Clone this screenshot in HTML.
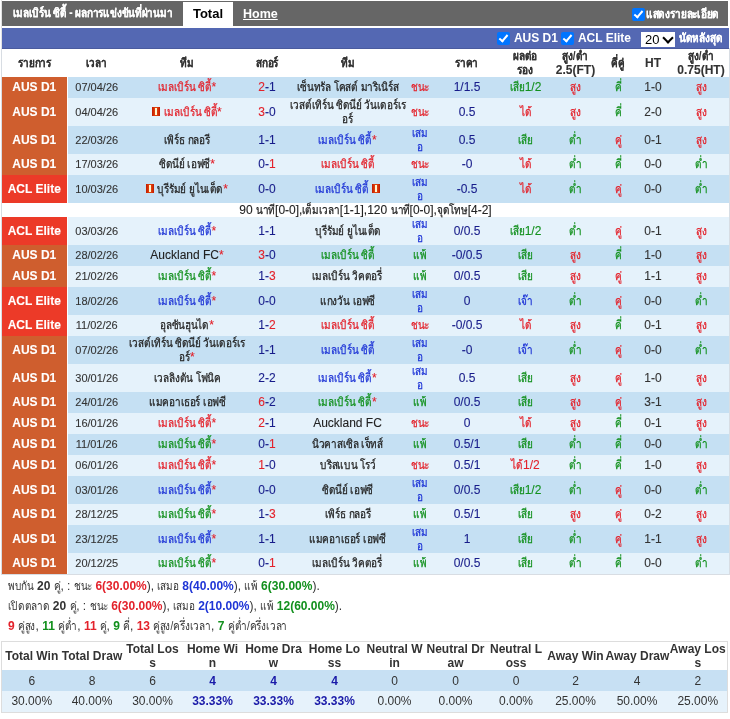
<!DOCTYPE html>
<html><head><meta charset="utf-8">
<style>
*{box-sizing:border-box}
html,body{margin:0;padding:0;background:#fff}
body{width:730px;height:719px;overflow:hidden;position:relative;will-change:transform;font-family:"Liberation Sans",sans-serif;color:#333}
.t{display:inline-block;transform:scaleX(.83);transform-origin:0 50%;line-height:10px;-webkit-text-stroke-width:.25px}
#title .t,#detail .t,#bar .t{-webkit-text-stroke-width:.15px}
tr.hd .t{-webkit-text-stroke-width:.05px}
#sum .t{-webkit-text-stroke-width:0}
tr.hd .t{line-height:14px}
#frame{position:absolute;left:1px;top:48px;width:729px;height:527px;border:1px solid #d8dde3;border-top:0}
.vline{position:absolute;left:1px;top:0;width:1px;height:575px;background:#e3e3e3}
#title{position:absolute;left:2px;top:1px;width:726px;height:25px;background:#666}
#title .tt{position:absolute;left:11px;top:0;line-height:25px;color:#fff;font-weight:bold;font-size:12px;white-space:nowrap}
#tabTotal{position:absolute;left:183px;top:2px;width:50px;height:26px;background:#fff;color:#000;font-weight:bold;font-size:13px;line-height:24px;text-align:center}
#tabHome{position:absolute;left:243px;top:2px;line-height:25px;color:#fff;font-weight:bold;font-size:12.5px;text-decoration:underline}
#detail{position:absolute;left:632px;top:2px;height:25px;color:#fff;font-weight:bold;font-size:12px;line-height:25px;white-space:nowrap}
.chk{display:inline-block;width:13px;height:13px;border-radius:2px;background:#0075ff;vertical-align:middle;position:relative;margin-right:1px}
.chk:after{content:"";position:absolute;left:4px;top:1px;width:3px;height:7px;border:solid #fff;border-width:0 2px 2px 0;transform:rotate(40deg)}
#bar{position:absolute;left:2px;top:28px;width:727px;height:21px;background:#5468b3;border-bottom:1px solid #4a5b9e;z-index:2}
#bar .f{position:absolute;top:0;line-height:20px;color:#fff;font-weight:bold;font-size:12px;white-space:nowrap}
#sel{position:absolute;left:639px;top:4px;width:34px;height:15px;background:#fff;color:#000;font-size:13px;line-height:15px;padding-left:4px}
#sel:after{content:"";position:absolute;left:23px;top:2px;width:6px;height:6px;border:solid #000;border-width:0 2.5px 2.5px 0;transform:rotate(45deg)}
#main{position:absolute;left:2px;top:48px;width:727px;border-collapse:collapse;table-layout:fixed}
#main td{-webkit-text-stroke-width:.1px;padding:0;text-align:center;vertical-align:middle;line-height:14px;font-size:12px;white-space:nowrap;overflow:visible}
#main tr.hd td{height:29px;background:#fff;font-weight:bold;color:#333;line-height:14px}
#main tr.sh td{height:21px;padding-bottom:2px}
#main tr.tall td{height:28px}
#main tr.k td{background:#c5e0f3}
#main tr.l td{background:#e5f2fb}
#main tr.info td{height:14px;background:#fff;font-size:12px;line-height:14px;color:#222}
#main td.lg{color:#fff;font-weight:bold;font-size:12px;border-right:1px solid #fff}
#main td.aus{background:#cf5e2e !important}
#main td.acl{background:#ec3a28 !important}
#main td.dt{font-size:11px;color:#333}
.cr{color:#e3222b}.cb_{color:#1a2fd0}
.cd{color:#222}
.cR,.cr{color:#e3222b}
.cB,.cb{color:#1f35d6}
.cG,.cg{color:#12901d}
td.cb{color:#1f35d6}
#main td.sc{color:#171c8a}
#main td.od{color:#171c8a}
#main td.ht{color:#333}
.st{color:#e3222b}
.rc{display:inline-block;width:8px;height:9px;background:linear-gradient(90deg,#c01a00,#e0400a 35%,#e0400a 65%,#c01a00);vertical-align:0px;position:relative}
.rc:after{content:"";position:absolute;left:3px;top:1px;width:2px;height:7px;background:#fff6d0}
#sum{position:absolute;left:8px;top:576px;font-size:12px;line-height:20px;color:#333;white-space:nowrap}
#sum b{font-weight:bold}
#stats{position:absolute;left:1px;top:641px;width:727px;border-collapse:collapse;table-layout:fixed;border:1px solid #ddd}
#stats td{padding:0;text-align:center;vertical-align:middle;font-size:12px;line-height:14px;white-space:nowrap}
#stats tr.sh td{height:28px;background:#fff;font-weight:bold;color:#333}
#stats tr.v td{height:21px;background:#c7e0f3}
#stats tr.p td{height:21px;background:#e6f2fb}
#stats .n{color:#1a1aa8;font-weight:bold}
</style></head><body>
<div class="vline"></div>
<div id="frame"></div>
<div id="title"><div class="tt"><span class="t" style="margin-right: -32.64px;">เมลเบิร์น ซิตี้ - ผลการแข่งขันที่ผ่านมา</span></div></div>
<div id="tabTotal">Total</div>
<div id="tabHome">Home</div>
<div id="detail"><span class="chk"></span><span class="t" style="margin-right: -14.96px;">แสดงรายละเอียด</span></div>
<div id="bar">
 <div class="f" style="left:495px"><span class="chk"></span> AUS D1</div>
 <div class="f" style="left:559px"><span class="chk"></span> ACL Elite</div>
 <div id="sel">20</div>
 <div class="f" style="left:677px"><span class="t" style="margin-right: -8.84px;">นัดหลังสุด</span></div>
</div>
<table id="main">
<colgroup><col style="width:65px"><col style="width:59px"><col style="width:122px"><col style="width:38px"><col style="width:123px"><col style="width:22px"><col style="width:72px"><col style="width:45px"><col style="width:55px"><col style="width:30px"><col style="width:40px"><col style="width:56px"></colgroup>
<tbody><tr class="hd"><td><span class="t" style="margin-right: -6.8px;">รายการ</span></td><td><span class="t" style="margin-right: -4.25px;">เวลา</span></td><td><span class="t" style="margin-right: -2.72px;">ทีม</span></td><td><span class="t" style="margin-right: -4.59px;">สกอร์</span></td><td><span class="t" style="margin-right: -2.72px;">ทีม</span></td><td></td><td><span class="t" style="margin-right: -4.76px;">ราคา</span></td><td><span class="t" style="margin-right: -4.93px;">ผลต่อ<br>รอง</span></td><td><span class="t" style="margin-right: -5.27px;">สูง/ต่ำ</span><br>2.5(FT)</td><td><span class="t" style="margin-right: -2.72px;">คี่คู่</span></td><td>HT</td><td><span class="t" style="margin-right: -5.27px;">สูง/ต่ำ</span><br>0.75(HT)</td></tr>
<tr class="sh k"><td class="lg aus">AUS D1</td><td class="dt">07/04/26</td><td class="tm cr"><span class="t" style="margin-right: -10.88px;">เมลเบิร์น ซิตี้</span><span class="st">*</span></td><td class="sc"><span class="cr">2</span>-1</td><td class="tm cd"><span class="t" style="margin-right: -20.91px;">เซ็นทรัล โคสต์ มาริเนิร์ส</span></td><td class="rs cr"><span class="t" style="margin-right: -3.74px;">ชนะ</span></td><td class="od">1/1.5</td><td class="hr cg"><span class="t" style="margin-right: -3.06px;">เสีย</span>1/2</td><td class="ou cr"><span class="t" style="margin-right: -2.21px;">สูง</span></td><td class="oe cg"><span class="t" style="margin-right: -1.36px;">คี่</span></td><td class="ht">1-0</td><td class="ou cr"><span class="t" style="margin-right: -2.21px;">สูง</span></td></tr>
<tr class="tall l"><td class="lg aus">AUS D1</td><td class="dt">04/04/26</td><td class="tm cr"><i class="rc"></i> <span class="t" style="margin-right: -10.88px;">เมลเบิร์น ซิตี้</span><span class="st">*</span></td><td class="sc"><span class="cr">3</span>-0</td><td class="tm cd"><span class="t" style="margin-right: -23.8px;">เวสต์เทิร์น ซิดนีย์ วันเดอร์เร</span><br><span class="t" style="margin-right: -2.21px;">อร์</span></td><td class="rs cr"><span class="t" style="margin-right: -3.74px;">ชนะ</span></td><td class="od">0.5</td><td class="hr cr"><span class="t" style="margin-right: -2.38px;">ได้</span></td><td class="ou cr"><span class="t" style="margin-right: -2.21px;">สูง</span></td><td class="oe cg"><span class="t" style="margin-right: -1.36px;">คี่</span></td><td class="ht">2-0</td><td class="ou cr"><span class="t" style="margin-right: -2.21px;">สูง</span></td></tr>
<tr class="tall k"><td class="lg aus">AUS D1</td><td class="dt">22/03/26</td><td class="tm cd"><span class="t" style="margin-right: -9.35px;">เพิร์ธ กลอรี</span></td><td class="sc">1-1</td><td class="tm cb"><span class="t" style="margin-right: -10.88px;">เมลเบิร์น ซิตี้</span><span class="st">*</span></td><td class="rs cb"><span class="t" style="margin-right: -3.23px;">เสม</span><br><span class="t" style="margin-right: -1.19px;">อ</span></td><td class="od">0.5</td><td class="hr cg"><span class="t" style="margin-right: -3.06px;">เสีย</span></td><td class="ou cg"><span class="t" style="margin-right: -2.55px;">ต่ำ</span></td><td class="oe cr"><span class="t" style="margin-right: -1.36px;">คู่</span></td><td class="ht">0-1</td><td class="ou cr"><span class="t" style="margin-right: -2.21px;">สูง</span></td></tr>
<tr class="sh l"><td class="lg aus">AUS D1</td><td class="dt">17/03/26</td><td class="tm cd"><span class="t" style="margin-right: -10.37px;">ซิดนีย์ เอฟซี</span><span class="st">*</span></td><td class="sc">0-<span class="cr">1</span></td><td class="tm cr"><span class="t" style="margin-right: -10.88px;">เมลเบิร์น ซิตี้</span></td><td class="rs cr"><span class="t" style="margin-right: -3.74px;">ชนะ</span></td><td class="od">-0</td><td class="hr cr"><span class="t" style="margin-right: -2.38px;">ได้</span></td><td class="ou cg"><span class="t" style="margin-right: -2.55px;">ต่ำ</span></td><td class="oe cg"><span class="t" style="margin-right: -1.36px;">คี่</span></td><td class="ht">0-0</td><td class="ou cg"><span class="t" style="margin-right: -2.55px;">ต่ำ</span></td></tr>
<tr class="tall k"><td class="lg acl">ACL Elite</td><td class="dt">10/03/26</td><td class="tm cd"><i class="rc"></i> <span class="t" style="margin-right: -13.43px;">บุรีรัมย์ ยูไนเต็ด</span><span class="st">*</span></td><td class="sc">0-0</td><td class="tm cb"><span class="t" style="margin-right: -10.88px;">เมลเบิร์น ซิตี้</span> <i class="rc"></i></td><td class="rs cb"><span class="t" style="margin-right: -3.23px;">เสม</span><br><span class="t" style="margin-right: -1.19px;">อ</span></td><td class="od">-0.5</td><td class="hr cr"><span class="t" style="margin-right: -2.38px;">ได้</span></td><td class="ou cg"><span class="t" style="margin-right: -2.55px;">ต่ำ</span></td><td class="oe cr"><span class="t" style="margin-right: -1.36px;">คู่</span></td><td class="ht">0-0</td><td class="ou cg"><span class="t" style="margin-right: -2.55px;">ต่ำ</span></td></tr>
<tr class="info"><td colspan="12">90 <span class="t" style="margin-right: -3.91px;">นาที</span>[0-0],<span class="t" style="margin-right: -7.65px;">เต็มเวลา</span>[1-1],120 <span class="t" style="margin-right: -3.91px;">นาที</span>[0-0],<span class="t" style="margin-right: -6.29px;">จุดโทษ</span>[4-2]</td></tr>
<tr class="tall l"><td class="lg acl">ACL Elite</td><td class="dt">03/03/26</td><td class="tm cb"><span class="t" style="margin-right: -10.88px;">เมลเบิร์น ซิตี้</span><span class="st">*</span></td><td class="sc">1-1</td><td class="tm cd"><span class="t" style="margin-right: -13.43px;">บุรีรัมย์ ยูไนเต็ด</span></td><td class="rs cb"><span class="t" style="margin-right: -3.23px;">เสม</span><br><span class="t" style="margin-right: -1.19px;">อ</span></td><td class="od">0/0.5</td><td class="hr cg"><span class="t" style="margin-right: -3.06px;">เสีย</span>1/2</td><td class="ou cg"><span class="t" style="margin-right: -2.55px;">ต่ำ</span></td><td class="oe cr"><span class="t" style="margin-right: -1.36px;">คู่</span></td><td class="ht">0-1</td><td class="ou cr"><span class="t" style="margin-right: -2.21px;">สูง</span></td></tr>
<tr class="sh k"><td class="lg aus">AUS D1</td><td class="dt">28/02/26</td><td class="tm cd">Auckland FC<span class="st">*</span></td><td class="sc"><span class="cr">3</span>-0</td><td class="tm cg"><span class="t" style="margin-right: -10.88px;">เมลเบิร์น ซิตี้</span></td><td class="rs cg"><span class="t" style="margin-right: -2.72px;">แพ้</span></td><td class="od">-0/0.5</td><td class="hr cg"><span class="t" style="margin-right: -3.06px;">เสีย</span></td><td class="ou cr"><span class="t" style="margin-right: -2.21px;">สูง</span></td><td class="oe cg"><span class="t" style="margin-right: -1.36px;">คี่</span></td><td class="ht">1-0</td><td class="ou cr"><span class="t" style="margin-right: -2.21px;">สูง</span></td></tr>
<tr class="sh l"><td class="lg aus">AUS D1</td><td class="dt">21/02/26</td><td class="tm cg"><span class="t" style="margin-right: -10.88px;">เมลเบิร์น ซิตี้</span><span class="st">*</span></td><td class="sc">1-<span class="cr">3</span></td><td class="tm cd"><span class="t" style="margin-right: -14.28px;">เมลเบิร์น วิคตอรี่</span></td><td class="rs cg"><span class="t" style="margin-right: -2.72px;">แพ้</span></td><td class="od">0/0.5</td><td class="hr cg"><span class="t" style="margin-right: -3.06px;">เสีย</span></td><td class="ou cr"><span class="t" style="margin-right: -2.21px;">สูง</span></td><td class="oe cr"><span class="t" style="margin-right: -1.36px;">คู่</span></td><td class="ht">1-1</td><td class="ou cr"><span class="t" style="margin-right: -2.21px;">สูง</span></td></tr>
<tr class="tall k"><td class="lg acl">ACL Elite</td><td class="dt">18/02/26</td><td class="tm cb"><span class="t" style="margin-right: -10.88px;">เมลเบิร์น ซิตี้</span><span class="st">*</span></td><td class="sc">0-0</td><td class="tm cd"><span class="t" style="margin-right: -11.22px;">แกงวัน เอฟซี</span></td><td class="rs cb"><span class="t" style="margin-right: -3.23px;">เสม</span><br><span class="t" style="margin-right: -1.19px;">อ</span></td><td class="od">0</td><td class="hr cb"><span class="t" style="margin-right: -3.06px;">เจ๊า</span></td><td class="ou cg"><span class="t" style="margin-right: -2.55px;">ต่ำ</span></td><td class="oe cr"><span class="t" style="margin-right: -1.36px;">คู่</span></td><td class="ht">0-0</td><td class="ou cg"><span class="t" style="margin-right: -2.55px;">ต่ำ</span></td></tr>
<tr class="sh l"><td class="lg acl">ACL Elite</td><td class="dt">11/02/26</td><td class="tm cd"><span class="t" style="margin-right: -10.03px;">อุลซันฮุนได</span><span class="st">*</span></td><td class="sc">1-<span class="cr">2</span></td><td class="tm cr"><span class="t" style="margin-right: -10.88px;">เมลเบิร์น ซิตี้</span></td><td class="rs cr"><span class="t" style="margin-right: -3.74px;">ชนะ</span></td><td class="od">-0/0.5</td><td class="hr cr"><span class="t" style="margin-right: -2.38px;">ได้</span></td><td class="ou cr"><span class="t" style="margin-right: -2.21px;">สูง</span></td><td class="oe cg"><span class="t" style="margin-right: -1.36px;">คี่</span></td><td class="ht">0-1</td><td class="ou cr"><span class="t" style="margin-right: -2.21px;">สูง</span></td></tr>
<tr class="tall k"><td class="lg aus">AUS D1</td><td class="dt">07/02/26</td><td class="tm cd"><span class="t" style="margin-right: -23.8px;">เวสต์เทิร์น ซิดนีย์ วันเดอร์เร</span><br><span class="t" style="margin-right: -2.21px;">อร์</span><span class="st">*</span></td><td class="sc">1-1</td><td class="tm cb"><span class="t" style="margin-right: -10.88px;">เมลเบิร์น ซิตี้</span></td><td class="rs cb"><span class="t" style="margin-right: -3.23px;">เสม</span><br><span class="t" style="margin-right: -1.19px;">อ</span></td><td class="od">-0</td><td class="hr cb"><span class="t" style="margin-right: -3.06px;">เจ๊า</span></td><td class="ou cg"><span class="t" style="margin-right: -2.55px;">ต่ำ</span></td><td class="oe cr"><span class="t" style="margin-right: -1.36px;">คู่</span></td><td class="ht">0-0</td><td class="ou cg"><span class="t" style="margin-right: -2.55px;">ต่ำ</span></td></tr>
<tr class="tall l"><td class="lg aus">AUS D1</td><td class="dt">30/01/26</td><td class="tm cd"><span class="t" style="margin-right: -13.6px;">เวลลิงตัน โฟนิค</span></td><td class="sc">2-2</td><td class="tm cb"><span class="t" style="margin-right: -10.88px;">เมลเบิร์น ซิตี้</span><span class="st">*</span></td><td class="rs cb"><span class="t" style="margin-right: -3.23px;">เสม</span><br><span class="t" style="margin-right: -1.19px;">อ</span></td><td class="od">0.5</td><td class="hr cg"><span class="t" style="margin-right: -3.06px;">เสีย</span></td><td class="ou cr"><span class="t" style="margin-right: -2.21px;">สูง</span></td><td class="oe cr"><span class="t" style="margin-right: -1.36px;">คู่</span></td><td class="ht">1-0</td><td class="ou cr"><span class="t" style="margin-right: -2.21px;">สูง</span></td></tr>
<tr class="sh k"><td class="lg aus">AUS D1</td><td class="dt">24/01/26</td><td class="tm cd"><span class="t" style="margin-right: -15.64px;">แมคอาเธอร์ เอฟซี</span></td><td class="sc"><span class="cr">6</span>-2</td><td class="tm cg"><span class="t" style="margin-right: -10.88px;">เมลเบิร์น ซิตี้</span><span class="st">*</span></td><td class="rs cg"><span class="t" style="margin-right: -2.72px;">แพ้</span></td><td class="od">0/0.5</td><td class="hr cg"><span class="t" style="margin-right: -3.06px;">เสีย</span></td><td class="ou cr"><span class="t" style="margin-right: -2.21px;">สูง</span></td><td class="oe cr"><span class="t" style="margin-right: -1.36px;">คู่</span></td><td class="ht">3-1</td><td class="ou cr"><span class="t" style="margin-right: -2.21px;">สูง</span></td></tr>
<tr class="sh l"><td class="lg aus">AUS D1</td><td class="dt">16/01/26</td><td class="tm cr"><span class="t" style="margin-right: -10.88px;">เมลเบิร์น ซิตี้</span><span class="st">*</span></td><td class="sc"><span class="cr">2</span>-1</td><td class="tm cd">Auckland FC</td><td class="rs cr"><span class="t" style="margin-right: -3.74px;">ชนะ</span></td><td class="od">0</td><td class="hr cr"><span class="t" style="margin-right: -2.38px;">ได้</span></td><td class="ou cr"><span class="t" style="margin-right: -2.21px;">สูง</span></td><td class="oe cg"><span class="t" style="margin-right: -1.36px;">คี่</span></td><td class="ht">0-1</td><td class="ou cr"><span class="t" style="margin-right: -2.21px;">สูง</span></td></tr>
<tr class="sh k"><td class="lg aus">AUS D1</td><td class="dt">11/01/26</td><td class="tm cg"><span class="t" style="margin-right: -10.88px;">เมลเบิร์น ซิตี้</span><span class="st">*</span></td><td class="sc">0-<span class="cr">1</span></td><td class="tm cd"><span class="t" style="margin-right: -14.45px;">นิวคาสเซิล เจ็ทส์</span></td><td class="rs cg"><span class="t" style="margin-right: -2.72px;">แพ้</span></td><td class="od">0.5/1</td><td class="hr cg"><span class="t" style="margin-right: -3.06px;">เสีย</span></td><td class="ou cg"><span class="t" style="margin-right: -2.55px;">ต่ำ</span></td><td class="oe cg"><span class="t" style="margin-right: -1.36px;">คี่</span></td><td class="ht">0-0</td><td class="ou cg"><span class="t" style="margin-right: -2.55px;">ต่ำ</span></td></tr>
<tr class="sh l"><td class="lg aus">AUS D1</td><td class="dt">06/01/26</td><td class="tm cr"><span class="t" style="margin-right: -10.88px;">เมลเบิร์น ซิตี้</span><span class="st">*</span></td><td class="sc"><span class="cr">1</span>-0</td><td class="tm cd"><span class="t" style="margin-right: -11.39px;">บริสแบน โรว์</span></td><td class="rs cr"><span class="t" style="margin-right: -3.74px;">ชนะ</span></td><td class="od">0.5/1</td><td class="hr cr"><span class="t" style="margin-right: -2.38px;">ได้</span>1/2</td><td class="ou cg"><span class="t" style="margin-right: -2.55px;">ต่ำ</span></td><td class="oe cg"><span class="t" style="margin-right: -1.36px;">คี่</span></td><td class="ht">1-0</td><td class="ou cr"><span class="t" style="margin-right: -2.21px;">สูง</span></td></tr>
<tr class="tall k"><td class="lg aus">AUS D1</td><td class="dt">03/01/26</td><td class="tm cb"><span class="t" style="margin-right: -10.88px;">เมลเบิร์น ซิตี้</span><span class="st">*</span></td><td class="sc">0-0</td><td class="tm cd"><span class="t" style="margin-right: -10.37px;">ซิดนีย์ เอฟซี</span></td><td class="rs cb"><span class="t" style="margin-right: -3.23px;">เสม</span><br><span class="t" style="margin-right: -1.19px;">อ</span></td><td class="od">0/0.5</td><td class="hr cg"><span class="t" style="margin-right: -3.06px;">เสีย</span>1/2</td><td class="ou cg"><span class="t" style="margin-right: -2.55px;">ต่ำ</span></td><td class="oe cr"><span class="t" style="margin-right: -1.36px;">คู่</span></td><td class="ht">0-0</td><td class="ou cg"><span class="t" style="margin-right: -2.55px;">ต่ำ</span></td></tr>
<tr class="sh l"><td class="lg aus">AUS D1</td><td class="dt">28/12/25</td><td class="tm cg"><span class="t" style="margin-right: -10.88px;">เมลเบิร์น ซิตี้</span><span class="st">*</span></td><td class="sc">1-<span class="cr">3</span></td><td class="tm cd"><span class="t" style="margin-right: -9.35px;">เพิร์ธ กลอรี</span></td><td class="rs cg"><span class="t" style="margin-right: -2.72px;">แพ้</span></td><td class="od">0.5/1</td><td class="hr cg"><span class="t" style="margin-right: -3.06px;">เสีย</span></td><td class="ou cr"><span class="t" style="margin-right: -2.21px;">สูง</span></td><td class="oe cr"><span class="t" style="margin-right: -1.36px;">คู่</span></td><td class="ht">0-2</td><td class="ou cr"><span class="t" style="margin-right: -2.21px;">สูง</span></td></tr>
<tr class="tall k"><td class="lg aus">AUS D1</td><td class="dt">23/12/25</td><td class="tm cb"><span class="t" style="margin-right: -10.88px;">เมลเบิร์น ซิตี้</span><span class="st">*</span></td><td class="sc">1-1</td><td class="tm cd"><span class="t" style="margin-right: -15.64px;">แมคอาเธอร์ เอฟซี</span></td><td class="rs cb"><span class="t" style="margin-right: -3.23px;">เสม</span><br><span class="t" style="margin-right: -1.19px;">อ</span></td><td class="od">1</td><td class="hr cg"><span class="t" style="margin-right: -3.06px;">เสีย</span></td><td class="ou cg"><span class="t" style="margin-right: -2.55px;">ต่ำ</span></td><td class="oe cr"><span class="t" style="margin-right: -1.36px;">คู่</span></td><td class="ht">1-1</td><td class="ou cr"><span class="t" style="margin-right: -2.21px;">สูง</span></td></tr>
<tr class="sh l"><td class="lg aus">AUS D1</td><td class="dt">20/12/25</td><td class="tm cg"><span class="t" style="margin-right: -10.88px;">เมลเบิร์น ซิตี้</span><span class="st">*</span></td><td class="sc">0-<span class="cr">1</span></td><td class="tm cd"><span class="t" style="margin-right: -14.28px;">เมลเบิร์น วิคตอรี่</span></td><td class="rs cg"><span class="t" style="margin-right: -2.72px;">แพ้</span></td><td class="od">0/0.5</td><td class="hr cg"><span class="t" style="margin-right: -3.06px;">เสีย</span></td><td class="ou cg"><span class="t" style="margin-right: -2.55px;">ต่ำ</span></td><td class="oe cg"><span class="t" style="margin-right: -1.36px;">คี่</span></td><td class="ht">0-0</td><td class="ou cg"><span class="t" style="margin-right: -2.55px;">ต่ำ</span></td></tr>
</tbody></table>
<div id="sum">
<div><span class="t" style="margin-right: -5.27px;">พบกัน</span> <b>20</b> <span class="t" style="margin-right: -1.36px;">คู่</span>, : <span class="t" style="margin-right: -3.74px;">ชนะ</span> <b class="cr">6(30.00%</b>), <span class="t" style="margin-right: -4.42px;">เสมอ</span> <b class="cB">8(40.00%</b>), <span class="t" style="margin-right: -2.72px;">แพ้</span> <b class="cG">6(30.00%</b>).</div>
<div><span class="t" style="margin-right: -8.5px;">เปิดตลาด</span> <b>20</b> <span class="t" style="margin-right: -1.36px;">คู่</span>, : <span class="t" style="margin-right: -3.74px;">ชนะ</span> <b class="cr">6(30.00%</b>), <span class="t" style="margin-right: -4.42px;">เสมอ</span> <b class="cB">2(10.00%</b>), <span class="t" style="margin-right: -2.72px;">แพ้</span> <b class="cG">12(60.00%</b>).</div>
<div><b class="cr">9</b> <span class="t" style="margin-right: -3.57px;">คู่สูง</span>, <b class="cG">11</b> <span class="t" style="margin-right: -3.91px;">คู่ต่ำ</span>, <b class="cr">11</b> <span class="t" style="margin-right: -1.36px;">คู่</span>, <b class="cG">9</b> <span class="t" style="margin-right: -1.36px;">คี่</span>, <b class="cr">13</b> <span class="t" style="margin-right: -11.73px;">คู่สูง/ครึ่งเวลา</span>, <b class="cG">7</b> <span class="t" style="margin-right: -12.07px;">คู่ต่ำ/ครึ่งเวลา</span></div>
</div>
<table id="stats">
<colgroup><col style="width:60px"><col style="width:61px"><col style="width:60px"><col style="width:60px"><col style="width:62px"><col style="width:60px"><col style="width:60px"><col style="width:62px"><col style="width:59px"><col style="width:60px"><col style="width:63px"><col style="width:59px"></colgroup>
<tbody><tr class="sh"><td>Total Win</td><td>Total Draw</td><td>Total Los<br>s</td><td>Home Wi<br>n</td><td>Home Dra<br>w</td><td>Home Lo<br>ss</td><td>Neutral W<br>in</td><td>Neutral Dr<br>aw</td><td>Neutral L<br>oss</td><td>Away Win</td><td>Away Draw</td><td>Away Los<br>s</td></tr>
<tr class="v"><td>6</td><td>8</td><td>6</td><td class="n">4</td><td class="n">4</td><td class="n">4</td><td>0</td><td>0</td><td>0</td><td>2</td><td>4</td><td>2</td></tr>
<tr class="p"><td>30.00%</td><td>40.00%</td><td>30.00%</td><td class="n">33.33%</td><td class="n">33.33%</td><td class="n">33.33%</td><td>0.00%</td><td>0.00%</td><td>0.00%</td><td>25.00%</td><td>50.00%</td><td>25.00%</td></tr>
</tbody></table>

</body></html>
